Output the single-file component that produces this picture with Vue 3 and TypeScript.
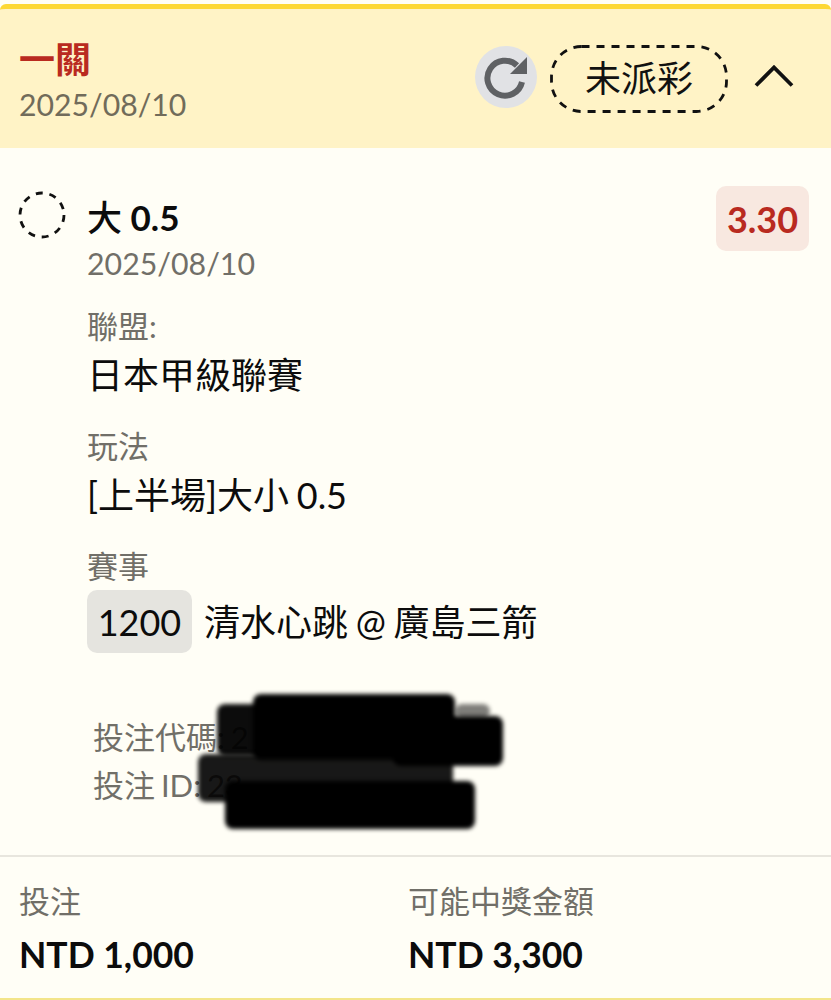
<script setup lang="ts">
interface Field {
  label: string
  value: string
}

const fields: Field[] = [
  { label: '聯盟:', value: '日本甲級聯賽' },
  { label: '玩法', value: '[上半場]大小 0.5' },
]

const totals: Field[] = [
  { label: '投注', value: 'NTD 1,000' },
  { label: '可能中獎金額', value: 'NTD 3,300' },
]
</script>

<template>
  <div class="card">
    <header class="head">
      <div class="head-left">
        <div class="title">一關</div>
        <div class="head-date">2025/08/10</div>
      </div>
      <div class="head-right">
        <span class="refresh">
          <svg width="44" height="44" viewBox="0 0 44 44">
            <path d="M38 27A17.5 17.5 0 1 1 33 10.5" fill="none" stroke="#5f6164" stroke-width="6" />
            <path d="M43 2V19H26z" fill="#5f6164" />
          </svg>
        </span>
        <svg class="status" width="178" height="68" viewBox="0 0 178 68">
          <rect x="1.5" y="1.5" width="175" height="65" rx="30" fill="none" stroke="#111" stroke-width="2.8" stroke-dasharray="8 7" />
          <text x="89" y="47" text-anchor="middle" class="status-text">未派彩</text>
        </svg>
        <svg class="chevron" width="42" height="24" viewBox="0 0 42 24">
          <path d="M3 21.5 21 3.500l18 18" fill="none" stroke="#111" stroke-width="3.800" />
        </svg>
      </div>
    </header>

    <main class="body">
      <div class="pick">
        <svg class="radio" width="48" height="48" viewBox="0 0 48 48">
          <circle cx="24" cy="24" r="22" fill="none" stroke="#111" stroke-width="2.800" stroke-dasharray="7 6.820" />
        </svg>
        <div class="pick-main">
          <div class="pick-top">
            <div>
              <div class="pick-name"><span class="pick-cjk">大</span> 0.5</div>
              <div class="pick-date">2025/08/10</div>
            </div>
            <span class="odds">3.30</span>
          </div>

          <div v-for="f in fields" :key="f.label" class="field">
            <div class="label">{{ f.label }}</div>
            <div class="value">{{ f.value }}</div>
          </div>

          <div class="field">
            <div class="label">賽事</div>
            <div class="match">
              <span class="code">1200</span>
              <span class="value">清水心跳 @ 廣島三箭</span>
            </div>
          </div>
        </div>
      </div>

      <div class="ids">
        <div>投注代碼: 2</div>
        <div>投注 ID: 23</div>
        <span class="scribble s1"></span>
        <span class="scribble s2"></span>
        <span class="scribble s3"></span>
        <span class="scribble s4"></span>
        <span class="scribble s5"></span>
        <span class="scribble s6"></span>
      </div>
    </main>

    <footer class="foot">
      <div v-for="t in totals" :key="t.label" class="total">
        <div class="label">{{ t.label }}</div>
        <div class="amount">{{ t.value }}</div>
      </div>
    </footer>
  </div>
</template>

<style scoped>
.card {
  height: 1000px;
  box-sizing: border-box;
  padding-top: 4px;
  display: flex;
  flex-direction: column;
  overflow: hidden;
  background: #fffef6;
  font-family: Lato, "Noto Sans CJK TC", sans-serif;
  color: #0c0c0c;
}

.head {
  height: 144px;
  flex-shrink: 0;
  box-sizing: border-box;
  border-top: 5px solid #fdd835;
  border-radius: 6px 6px 0 0;
  background: #fff3c6;
  padding: 0 36px 0 19px;
  display: flex;
  justify-content: space-between;
  align-items: center;
}

.head-left {
  margin-top: 8px;
}

.title {
  font-size: 36px;
  line-height: 42px;
  font-weight: 700;
  color: #b92a1f;
}

.head-date {
  font-size: 30.200px;
  line-height: 48px;
  color: #716b5a;
}

.head-right {
  display: flex;
  align-items: center;
}

.refresh {
  width: 62px;
  height: 62px;
  margin-top: -4px;
  border-radius: 50%;
  background: #e1e2e5;
  display: flex;
  align-items: center;
  justify-content: center;
}

.status {
  margin-left: 13px;
}

.status-text {
  font-size: 36px;
  fill: #111;
}

.chevron {
  margin-left: 25px;
  margin-top: -6px;
}

.body {
  flex: 1;
  padding: 38px 22px 0 20px;
}

.pick {
  display: flex;
  gap: 21px;
}

.radio {
  flex-shrink: 0;
  margin: 5px 0 0 -2px;
}

.pick-main {
  flex: 1;
}

.pick-top {
  display: flex;
  justify-content: space-between;
  align-items: flex-start;
  padding-bottom: 4px;
}

.pick-name {
  font-size: 35px;
  line-height: 62px;
  font-weight: 700;
}

.pick-cjk {
  font-weight: 500;
}

.pick-date {
  font-size: 30.300px;
  line-height: 30px;
  color: #716f68;
}

.odds {
  width: 93px;
  height: 65px;
  border-radius: 10px;
  background: #f8e8e0;
  color: #b92a1f;
  font-size: 36px;
  font-weight: 700;
  display: flex;
  align-items: center;
  justify-content: center;
}

.field {
  margin-top: 22px;
}

.label {
  font-size: 31px;
  line-height: 44px;
  color: #716f68;
}

.value {
  font-size: 36px;
  line-height: 54px;
  word-spacing: -1.500px;
}

.match {
  display: flex;
  align-items: center;
  gap: 12px;
  margin-top: 2px;
}

.code {
  width: 105px;
  height: 63px;
  border-radius: 10px;
  background: #e5e4df;
  font-size: 36px;
  display: flex;
  align-items: center;
  justify-content: center;
}

.ids {
  position: relative;
  margin: 60px 0 0 73px;
  font-size: 31px;
  line-height: 48px;
  word-spacing: -2px;
  color: #716f68;
}

.scribble {
  position: absolute;
  background: #000;
  border-radius: 8px;
  filter: blur(2px);
}

.s1 { left: 124px; top: -9px; width: 50px; height: 52px; opacity: 0.95; }
.s2 { left: 160px; top: -19px; width: 202px; height: 66px; }
.s3 { left: 300px; top: 3px; width: 110px; height: 50px; }
.s4 { left: 105px; top: 41px; width: 255px; height: 48px; opacity: 0.9; }
.s5 { left: 132px; top: 68px; width: 250px; height: 48px; }
.s6 { left: 362px; top: -9px; width: 35px; height: 14px; opacity: 0.5; }

.foot {
  height: 145px;
  flex-shrink: 0;
  box-sizing: border-box;
  border-top: 2px solid #e8e6de;
  border-bottom: 2px solid #f3e58a;
  padding: 22px 19px 0;
  display: flex;
}

.total {
  width: 389px;
}

.amount {
  font-size: 35.500px;
  line-height: 64px;
  font-weight: 700;
}
</style>

<style>
html, body {
  background: #fffef6;
}
</style>
